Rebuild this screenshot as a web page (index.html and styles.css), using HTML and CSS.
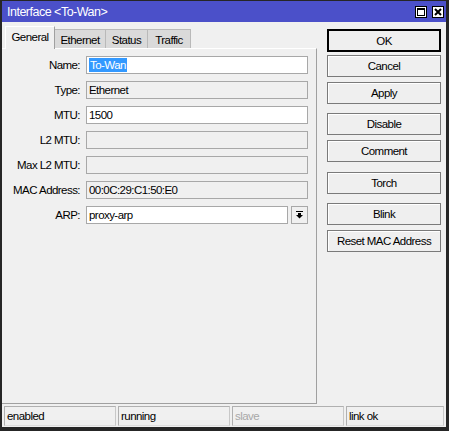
FILE: index.html
```html
<!DOCTYPE html>
<html>
<head>
<meta charset="utf-8">
<link rel="stylesheet" href="styles.css">
</head>
<body>
<div class="window">
  <div class="titlebar">
    <span class="title">Interface &lt;To-Wan&gt;</span>
    <div class="tbtns">
      <span class="tbtn"><svg width="10" height="10" viewBox="0 0 10 10"><rect x="1.5" y="1.5" width="7" height="7" fill="none" stroke="#000" stroke-width="1"/><rect x="1" y="1" width="8" height="2" fill="#000"/></svg></span>
      <span class="tbtn"><svg width="10" height="10" viewBox="0 0 10 10"><path d="M2 2 L8 8 M8 2 L2 8" stroke="#000" stroke-width="2" fill="none"/></svg></span>
    </div>
  </div>
  <div class="main">
    <div class="left">
      <div class="tabs">
        <span class="tab active">General</span>
        <span class="tab t-eth">Ethernet</span>
        <span class="tab t-status">Status</span>
        <span class="tab t-traffic">Traffic</span>
      </div>
      <div class="panel">
        <div class="row"><span class="label">Name:</span><span class="field edit"><span class="sel">To-Wan</span></span></div>
        <div class="row"><span class="label">Type:</span><span class="field">Ethernet</span></div>
        <div class="row"><span class="label">MTU:</span><span class="field edit">1500</span></div>
        <div class="row"><span class="label">L2 MTU:</span><span class="field"></span></div>
        <div class="row"><span class="label">Max L2 MTU:</span><span class="field"></span></div>
        <div class="row"><span class="label">MAC Address:</span><span class="field">00:0C:29:C1:50:E0</span></div>
        <div class="row"><span class="label">ARP:</span><span class="field edit short">proxy-arp</span><span class="drop"><svg width="7" height="8" viewBox="0 0 7 8"><rect x="0" y="0" width="7" height="1" fill="#000"/><rect x="2" y="2" width="3" height="2" fill="#000"/><polygon points="0,4 7,4 3.5,7.5" fill="#000"/></svg></span></div>
      </div>
    </div>
    <div class="buttons">
      <span class="btn ok">OK</span>
      <span class="btn g3">Cancel</span>
      <span class="btn g5">Apply</span>
      <span class="btn g9">Disable</span>
      <span class="btn g5">Comment</span>
      <span class="btn g10">Torch</span>
      <span class="btn g9">Blink</span>
      <span class="btn g5">Reset MAC Address</span>
    </div>
  </div>
  <div class="statusbar">
    <span class="cell">enabled</span>
    <span class="cell">running</span>
    <span class="cell dim">slave</span>
    <span class="cell last">link ok</span>
  </div>
</div>
</body>
</html>
```
FILE: styles.css
```css
* { box-sizing: border-box; }
html, body { margin: 0; padding: 0; background: #f0f0f0; }
body {
  font-family: "Liberation Sans", Arial, sans-serif;
  font-size: 11.5px;
  letter-spacing: -0.55px;
  color: #000;
}
.window {
  width: 449px;
  height: 431px;
  display: flex;
  flex-direction: column;
  background: #f0f0f0;
  border-style: solid;
  border-color: #262626;
  border-width: 1px 3px 4px 2px;
}
.titlebar {
  height: 21px;
  flex: none;
  background: #4b50c9;
  display: flex;
  align-items: center;
  justify-content: space-between;
  padding: 0 2px 0 5px;
}
.title { color: #fff; font-size: 12.5px; letter-spacing: -0.5px; }
.tbtns { display: flex; gap: 5px; }
.tbtn {
  width: 12px; height: 12px;
  background: #fff;
  border: 1px solid #000;
  display: flex; align-items: center; justify-content: center;
}
.tbtn svg { display: block; }
.main {
  flex: none;
  height: 382px;
  display: flex;
  gap: 10px;
}
.left {
  width: 315px;
  display: flex;
  flex-direction: column;
  padding-top: 4px;
}
.tabs {
  display: flex;
  align-items: flex-end;
  padding-left: 3px;
  height: 22px;
  position: relative;
  z-index: 1;
}
.tab {
  height: 19px;
  background: #dadada;
  border: 1px solid #b9b9b9;
  border-bottom: none;
  border-left: none;
  display: flex; align-items: center; justify-content: center;
  padding-top: 1px;
}
.tab.active {
  height: 23px;
  margin-bottom: -1px;
  width: 50px;
  background: #f0f0f0;
  border-left: 1px solid #fff;
  border-top: 1px solid #fff;
  border-right: 1px solid #a0a0a0;
  padding-bottom: 3px;
}
.t-eth { width: 51px; }
.t-status { width: 42px; }
.t-traffic { width: 43px; }
.panel {
  flex: 1;
  border-top: 1px solid #fff;
  border-right: 1px solid #a0a0a0;
  border-bottom: 1px solid #a0a0a0;
  padding-top: 7px;
  display: flex;
  flex-direction: column;
  gap: 7px;
}
.row { display: flex; align-items: center; height: 18px; }
.label { width: 78px; text-align: right; margin-right: 6px; }
.field {
  width: 222px; height: 18px;
  border: 1px solid #a8a8a8;
  background: #f0f0f0;
  display: flex; align-items: center;
  padding-left: 2px;
  white-space: nowrap;
}
.field.edit { background: #fff; }
.field.short { width: 202px; }
.sel { background: #3399ff; color: #fff; padding: 0 1px; line-height: 14px; }
.drop {
  width: 17px; height: 18px;
  margin-left: 3px;
  border: 1px solid #a8a8a8;
  background: #f0f0f0;
  display: flex; align-items: center; justify-content: center;
}
.drop svg { display: block; }
.buttons {
  width: 114px;
  display: flex;
  flex-direction: column;
  padding-top: 7px;
}
.btn {
  height: 22px;
  border: 1px solid #7a7a7a;
  background: #efefef;
  box-shadow: inset 1px 1px 0 #fff;
  display: flex; align-items: center; justify-content: center;
  flex: none;
}
.btn.ok { height: 23px; border: 2px solid #000; box-shadow: none; }
.g3 { margin-top: 3px; }
.g5 { margin-top: 5px; }
.g9 { margin-top: 9px; }
.g10 { margin-top: 10px; }
.statusbar {
  flex: none;
  display: flex;
  gap: 2px;
  margin-top: 2px;
  padding-left: 2px;
  height: 21px;
  padding-bottom: 1px;
}
.cell {
  width: 112px; height: 20px;
  border: 1px solid #b0b0b0;
  border-right-color: #c8c8c8;
  border-bottom-color: #dedede;
  padding-left: 2px;
  display: flex; align-items: center;
  white-space: nowrap;
}
.cell.last { width: 98px; }
.cell.dim { color: #a8a8a8; }
```
